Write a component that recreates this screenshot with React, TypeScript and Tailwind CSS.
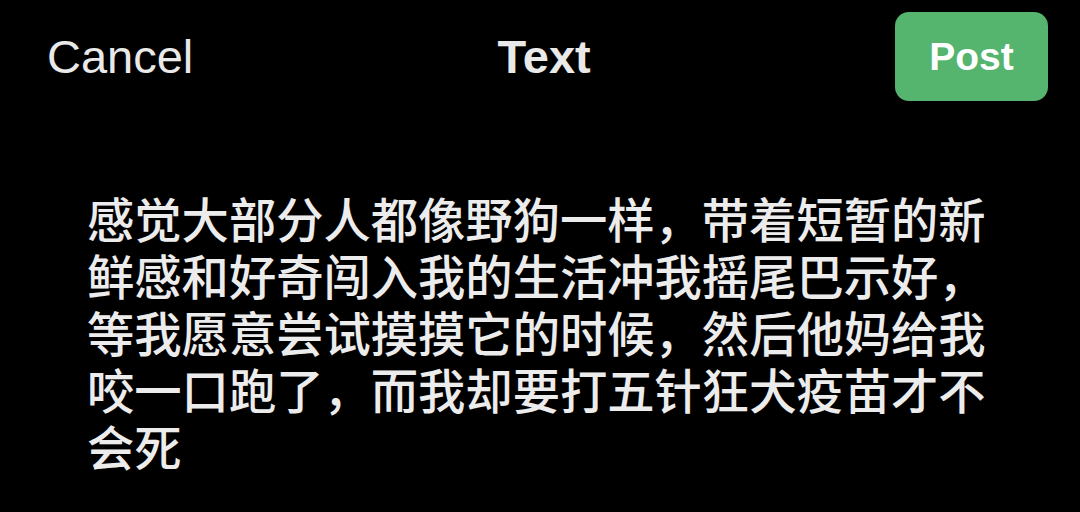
import React from "react";

const lines = [
  "感觉大部分人都像野狗一样，带着短暂的新",
  "鲜感和好奇闯入我的生活冲我摇尾巴示好，",
  "等我愿意尝试摸摸它的时候，然后他妈给我",
  "咬一口跑了，而我却要打五针狂犬疫苗才不",
  "会死",
];

export default function App() {
  return (
    <div className="w-[1080px] h-[512px] bg-black overflow-hidden font-['Liberation_Sans',Arial,sans-serif]">
      <div className="flex items-center justify-between pl-[47px] pr-[32px] pt-[12px]">
        <span className="text-[47px] leading-none text-[#e9e9e9]">Cancel</span>
        <span className="text-[47px] leading-none font-bold text-[#e9e9e9]">Text</span>
        <button className="w-[153px] h-[89px] rounded-[14px] bg-[#55b46d] flex items-center justify-center text-[39px] font-bold text-white leading-none">
          Post
        </button>
      </div>
      <div className="mt-[88px] pl-[87px] text-[47.3px] leading-[57px] font-medium text-[#ececec] whitespace-nowrap font-['Noto_Sans_CJK_SC','Noto_Sans',sans-serif]">
        {lines.map((l, i) => (
          <div key={i} className="h-[57px]">
            {l}
          </div>
        ))}
      </div>
    </div>
  );
}
